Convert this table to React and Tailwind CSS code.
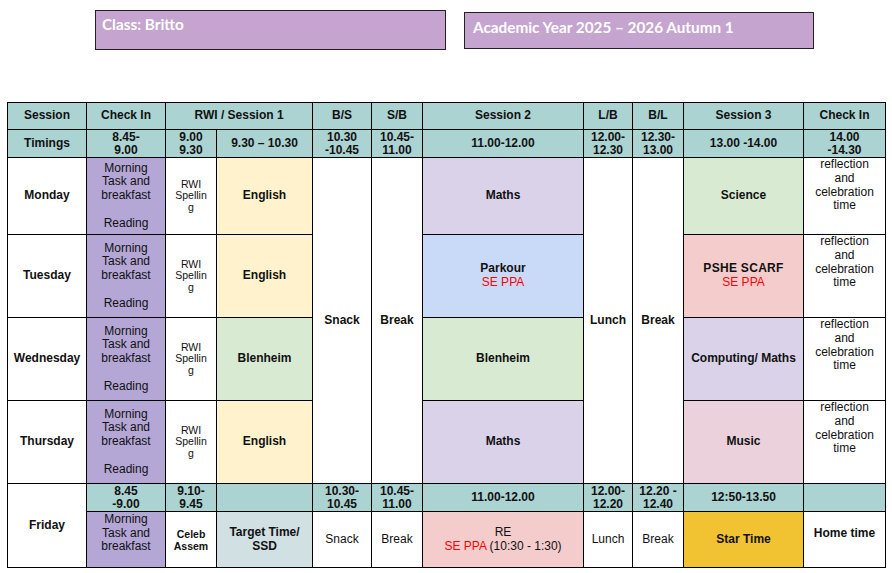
import React from "react";

// ── Colours picked from the timetable sheet ───────────────────────────────
const TEAL = "bg-[#abd3d1]";
const PURPLE = "bg-[#b4a7d6]";
const YELLOW = "bg-[#fff2cc]";
const LAVENDER = "bg-[#d9d2e9]";
const GREEN = "bg-[#d9ead3]";
const BLUE = "bg-[#c9daf8]";
const PINK = "bg-[#f4cccc]";
const ROSE = "bg-[#ead1dc]";
const SLATE = "bg-[#d0e0e3]";
const GOLD = "bg-[#f1c232]";

function Cell({ children, className = "", bold, ...rest }) {
  return (
    <td
      className={`border border-black px-[2px] text-center align-middle text-[12px] ${bold ? "font-bold" : ""} ${className}`}
      {...rest}
    >
      {children}
    </td>
  );
}

function Lines({ items }) {
  return items.map((t, i) => (
    <div key={i}>{t === "" ? "\u00a0" : t}</div>
  ));
}

const morning = ["Morning", "Task and", "breakfast", "", "Reading"];
const reflection = ["reflection", "and", "celebration", "time"];

function Rwi() {
  return (
    <Cell className="text-[10.5px]! leading-[11.5px]">
      <Lines items={["RWI", "Spellin", "g"]} />
    </Cell>
  );
}

function Red({ children }) {
  return <span className="font-normal text-[#ff0000]">{children}</span>;
}

export default function App() {
  return (
    <div className="w-[892px] h-[573px] bg-white font-['Liberation_Sans',Arial,sans-serif] text-[#111]">
      {/* ── Title boxes ── */}
      <div className="flex pl-[95px] pt-[10px] font-['Lato',sans-serif] font-bold text-[15.3px] text-white">
        <div className="w-[351px] h-[40px] bg-[#c5a5cf] border border-[#222] pl-[6px] pt-[2px]">Class: Britto</div>
        <div className="w-[350px] h-[37px] mt-[2px] ml-[18px] bg-[#c5a5cf] border border-[#222] pl-[8px] pt-[3px]">
          Academic Year 2025 – 2026 Autumn 1
        </div>
      </div>

      {/* ── Timetable ── */}
      <table className="mt-[52px] ml-[7px] w-[879px] table-fixed leading-[13.8px]">
        <colgroup>
          <col className="w-[79px]" />
          <col className="w-[79px]" />
          <col className="w-[51px]" />
          <col className="w-[96px]" />
          <col className="w-[59px]" />
          <col className="w-[51px]" />
          <col className="w-[161px]" />
          <col className="w-[49px]" />
          <col className="w-[51px]" />
          <col className="w-[120px]" />
          <col className="w-[82px]" />
        </colgroup>
        <tbody>
          <tr className={`h-[27px] ${TEAL}`}>
            <Cell bold>Session</Cell>
            <Cell bold>Check In</Cell>
            <Cell bold colSpan={2}>RWI / Session 1</Cell>
            <Cell bold>B/S</Cell>
            <Cell bold>S/B</Cell>
            <Cell bold>Session 2</Cell>
            <Cell bold>L/B</Cell>
            <Cell bold>B/L</Cell>
            <Cell bold>Session 3</Cell>
            <Cell bold>Check In</Cell>
          </tr>
          <tr className={`h-[28px] ${TEAL} leading-[13px]`}>
            <Cell bold>Timings</Cell>
            <Cell bold><Lines items={["8.45-", "9.00"]} /></Cell>
            <Cell bold><Lines items={["9.00", "9.30"]} /></Cell>
            <Cell bold>9.30 – 10.30</Cell>
            <Cell bold><Lines items={["10.30", "-10.45"]} /></Cell>
            <Cell bold><Lines items={["10.45-", "11.00"]} /></Cell>
            <Cell bold>11.00-12.00</Cell>
            <Cell bold><Lines items={["12.00-", "12.30"]} /></Cell>
            <Cell bold><Lines items={["12.30-", "13.00"]} /></Cell>
            <Cell bold>13.00 -14.00</Cell>
            <Cell bold><Lines items={["14.00", "-14.30"]} /></Cell>
          </tr>

          {/* Monday */}
          <tr className="h-[77px]">
            <Cell bold>Monday</Cell>
            <Cell className={PURPLE}><Lines items={morning} /></Cell>
            <Rwi />
            <Cell bold className={YELLOW}>English</Cell>
            <Cell bold rowSpan={4}>Snack</Cell>
            <Cell bold rowSpan={4}>Break</Cell>
            <Cell bold className={LAVENDER}>Maths</Cell>
            <Cell bold rowSpan={4}>Lunch</Cell>
            <Cell bold rowSpan={4}>Break</Cell>
            <Cell bold className={GREEN}>Science</Cell>
            <Cell className="align-top!"><Lines items={reflection} /></Cell>
          </tr>

          {/* Tuesday */}
          <tr className="h-[83px]">
            <Cell bold>Tuesday</Cell>
            <Cell className={PURPLE}><Lines items={morning} /></Cell>
            <Rwi />
            <Cell bold className={YELLOW}>English</Cell>
            <Cell bold className={BLUE}>
              <div>Parkour</div>
              <div><Red>SE PPA</Red></div>
            </Cell>
            <Cell bold className={`${PINK} pb-[1px]`}>
              <div className="tracking-[0.3px]">PSHE SCARF</div>
              <div><Red>SE PPA</Red></div>
            </Cell>
            <Cell className="align-top!"><Lines items={reflection} /></Cell>
          </tr>

          {/* Wednesday */}
          <tr className="h-[83px]">
            <Cell bold>Wednesday</Cell>
            <Cell className={PURPLE}><Lines items={morning} /></Cell>
            <Rwi />
            <Cell bold className={GREEN}>Blenheim</Cell>
            <Cell bold className={GREEN}>Blenheim</Cell>
            <Cell bold className={LAVENDER}>Computing/ Maths</Cell>
            <Cell className="align-top!"><Lines items={reflection} /></Cell>
          </tr>

          {/* Thursday */}
          <tr className="h-[83px]">
            <Cell bold>Thursday</Cell>
            <Cell className={PURPLE}><Lines items={morning} /></Cell>
            <Rwi />
            <Cell bold className={YELLOW}>English</Cell>
            <Cell bold className={LAVENDER}>Maths</Cell>
            <Cell bold className={ROSE}>Music</Cell>
            <Cell className="align-top!"><Lines items={reflection} /></Cell>
          </tr>

          {/* Friday */}
          <tr className={`h-[28px] ${TEAL} leading-[13px]`}>
            <Cell bold rowSpan={2} className="bg-white">Friday</Cell>
            <Cell bold><Lines items={["8.45", "-9.00"]} /></Cell>
            <Cell bold><Lines items={["9.10-", "9.45"]} /></Cell>
            <Cell bold></Cell>
            <Cell bold><Lines items={["10.30-", "10.45"]} /></Cell>
            <Cell bold><Lines items={["10.45-", "11.00"]} /></Cell>
            <Cell bold>11.00-12.00</Cell>
            <Cell bold><Lines items={["12.00-", "12.20"]} /></Cell>
            <Cell bold><Lines items={["12.20 -", "12.40"]} /></Cell>
            <Cell bold>12:50-13.50</Cell>
            <Cell bold></Cell>
          </tr>
          <tr className="h-[56px]">
            <Cell className={`${PURPLE} pb-[12px]`}><Lines items={["Morning", "Task and", "breakfast"]} /></Cell>
            <Cell bold className="text-[10.5px]! leading-[12px]"><Lines items={["Celeb", "Assem"]} /></Cell>
            <Cell bold className={SLATE}><Lines items={["Target Time/", "SSD"]} /></Cell>
            <Cell>Snack</Cell>
            <Cell>Break</Cell>
            <Cell className={PINK}>
              <div>RE</div>
              <div><Red>SE PPA</Red> (10:30 - 1:30)</div>
            </Cell>
            <Cell>Lunch</Cell>
            <Cell>Break</Cell>
            <Cell bold className={GOLD}>Star Time</Cell>
            <Cell bold className="pb-[12px]">Home time</Cell>
          </tr>
        </tbody>
      </table>
    </div>
  );
}
